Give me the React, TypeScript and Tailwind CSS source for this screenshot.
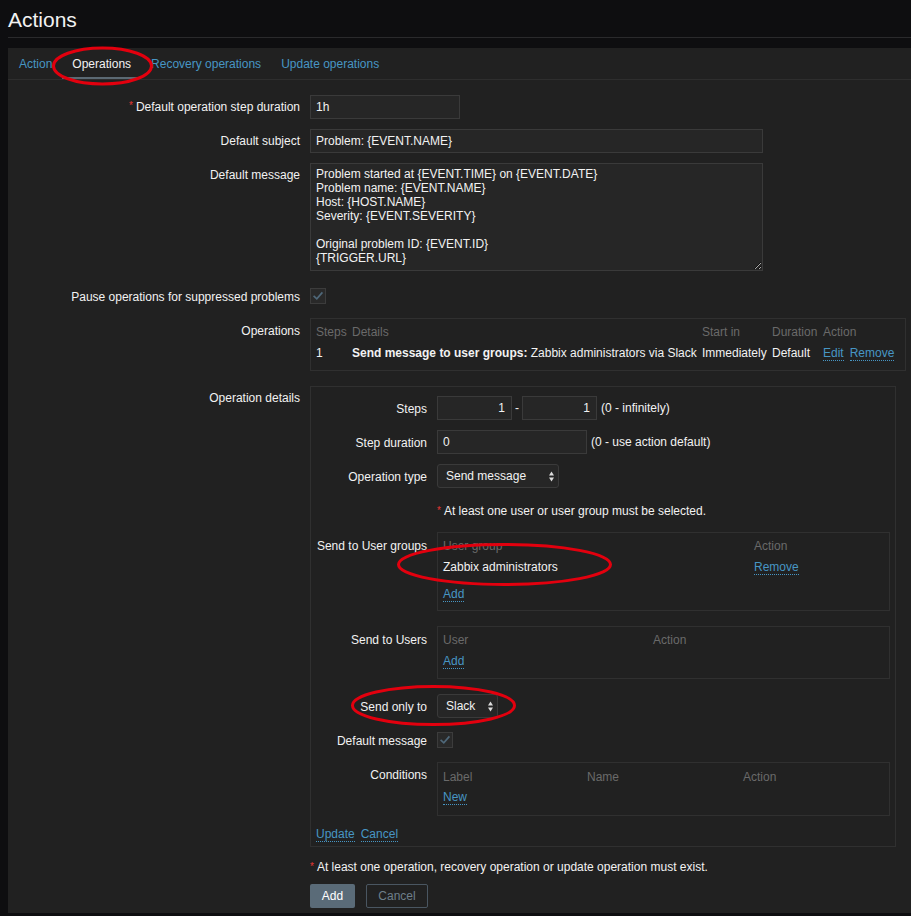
import React from 'react';

const linkCls = 'inline-block leading-[14px] text-[#4796c4] border-b border-dotted border-[#4796c4]';
const inputCls =
  'h-[24px] border border-[#3a3a3a] bg-[#262626] px-[5px] text-[12px] text-[#f2f2f2] outline-none';
const boxCls = 'border border-[#303030]';
const headCls = 'text-[#6a6a6a]';
// body rows of the small tables sit a pixel lower than their headers
const cellRow = 'flex h-[20px] items-center pt-[2px]';

const Asterisk = () => (
  <span className="mr-[3px] inline-block align-top text-[10px] leading-[12px] text-[#e33734]">*</span>
);

const Check = () => (
  <span className="flex h-[16px] w-[16px] items-center justify-center border border-[#3c3c3c] bg-[#292929]">
    <svg width="14" height="14" viewBox="1 1 14 14">
      <path d="M3.6 7.8 6.8 10.8 12.4 4.4" fill="none" stroke="#4f687a" strokeWidth="1.7" />
    </svg>
  </span>
);

const Arrows = () => (
  <svg width="5" height="11" viewBox="0 0 5 11" className="fill-[#dcdcdc]">
    <path d="M0 4.5 2.5 0.5 5 4.5Z" />
    <path d="M0 6.5 2.5 10.5 5 6.5Z" />
  </svg>
);

const Select = ({ value, width }: { value: string; width: string }) => (
  <div
    className={`flex h-[24px] ${width} items-center justify-between rounded-[3px] border border-[#3a3a3a] bg-[#262626] pl-[8px] pr-[4px]`}
  >
    <span>{value}</span>
    <Arrows />
  </div>
);

interface RowProps {
  label?: string;
  required?: boolean;
  labelPad?: string;
  className?: string;
  children: React.ReactNode;
}

// outer form: labels end at a fixed column, controls start 10px after
const Row = ({ label, required, labelPad = 'pt-[6px]', className = '', children }: RowProps) => (
  <div className={`flex ${className}`}>
    <div className={`w-[292px] shrink-0 text-right ${labelPad}`}>
      {required && <Asterisk />}
      {label}
    </div>
    <div className="ml-[10px] min-w-0 flex-1">{children}</div>
  </div>
);

// operation details box uses a narrower label column
const InnerRow = ({ label, labelPad = 'pt-[6px]', className = '', children }: RowProps) => (
  <div className={`flex ${className}`}>
    <div className={`w-[111px] shrink-0 text-right ${labelPad}`}>{label}</div>
    <div className="ml-[10px] min-w-0 flex-1">{children}</div>
  </div>
);

const tabs = ['Action', 'Operations', 'Recovery operations', 'Update operations'];

const message = `Problem started at {EVENT.TIME} on {EVENT.DATE}
Problem name: {EVENT.NAME}
Host: {HOST.NAME}
Severity: {EVENT.SEVERITY}

Original problem ID: {EVENT.ID}
{TRIGGER.URL}`;

export default function App() {
  return (
    <div className="relative h-[916px] overflow-hidden bg-[#0e0e10] font-['Liberation_Sans',Arial,sans-serif] text-[12px] leading-[14px] text-[#f2f2f2]">
      <div className="ml-2 h-[38px] border-b border-[#2a2a2c] pt-[8px]">
        <h1 className="text-[21px] leading-[24px]">Actions</h1>
      </div>

      <div className="ml-2 mt-[10px] h-[865px] bg-[#212121]">
        <div className="flex h-[32px] border-b border-[#2e2e2e] pl-px">
          {tabs.map((t) => (
            <div
              key={t}
              className={`relative flex items-center px-[10px] ${t === 'Operations' ? 'text-[#f2f2f2]' : 'text-[#4796c4]'}`}
            >
              {t}
              {t === 'Operations' && <span className="absolute bottom-0 left-0 right-0 h-[2px] bg-[#5b6973]" />}
            </div>
          ))}
        </div>

        <div className="pt-[15px]">
          <Row label="Default operation step duration" required labelPad="pt-[5px]">
            <input readOnly value="1h" className={`${inputCls} w-[150px]`} />
          </Row>
          <Row label="Default subject" labelPad="pt-[5px]" className="mt-[10px]">
            <input readOnly value="Problem: {EVENT.NAME}" className={`${inputCls} w-[453px]`} />
          </Row>
          <Row label="Default message" labelPad="pt-[5px]" className="mt-[10px]">
            <textarea
              readOnly
              value={message}
              className="block h-[108px] w-[453px] border border-[#3a3a3a] bg-[#262626] px-[5px] pt-[3px] text-[12px] leading-[14px] text-[#f2f2f2] outline-none"
            />
          </Row>
          <Row label="Pause operations for suppressed problems" className="mt-[13px]">
            <div className="flex h-[24px] items-center">
              <Check />
            </div>
          </Row>

          <Row label="Operations" className="mt-[10px]">
            <div className={`${boxCls} w-[596px] px-[5px] pb-[8px] pt-[3px]`}>
              <div className={`grid h-[20px] grid-cols-[36px_350px_70px_51px_1fr] items-center ${headCls}`}>
                <span>Steps</span>
                <span>Details</span>
                <span>Start in</span>
                <span>Duration</span>
                <span>Action</span>
              </div>
              <div className="grid h-[20px] grid-cols-[36px_350px_70px_51px_1fr] items-center whitespace-nowrap pt-[2px]">
                <span>1</span>
                <span>
                  <b>Send message to user groups:</b> Zabbix administrators via Slack
                </span>
                <span>Immediately</span>
                <span>Default</span>
                <span className="flex gap-[6px]">
                  <a className={linkCls}>Edit</a>
                  <a className={linkCls}>Remove</a>
                </span>
              </div>
            </div>
          </Row>

          <Row label="Operation details" labelPad="pt-[5px]" className="mt-[15px]">
            <div className={`${boxCls} w-[586px] pb-[4px] pl-[5px] pt-[9px]`}>
              <InnerRow label="Steps">
                <div className="flex h-[24px] items-center">
                  <input readOnly value="1" className={`${inputCls} w-[75px] pr-[6px] text-right`} />
                  <span className="mx-[3px]">-</span>
                  <input readOnly value="1" className={`${inputCls} w-[75px] pr-[6px] text-right`} />
                  <span className="ml-[4px]">(0 - infinitely)</span>
                </div>
              </InnerRow>
              <InnerRow label="Step duration" className="mt-[10px]">
                <div className="flex h-[24px] items-center">
                  <input readOnly value="0" className={`${inputCls} w-[150px]`} />
                  <span className="ml-[4px]">(0 - use action default)</span>
                </div>
              </InnerRow>
              <InnerRow label="Operation type" className="mt-[10px]">
                <Select value="Send message" width="w-[122px]" />
              </InnerRow>
              <InnerRow className="mt-[10px]">
                <div className="flex h-[24px] items-center pt-[2px]">
                  <Asterisk />
                  At least one user or user group must be selected.
                </div>
              </InnerRow>

              <InnerRow label="Send to User groups" labelPad="pt-[7px]" className="mt-[10px]">
                <div className={`${boxCls} w-[453px] px-[5px] pb-[7px] pt-[3px]`}>
                  <div className={`flex h-[20px] items-center ${headCls}`}>
                    <span className="w-[311px]">User group</span>
                    <span>Action</span>
                  </div>
                  <div className={cellRow}>
                    <span className="w-[311px]">Zabbix administrators</span>
                    <a className={linkCls}>Remove</a>
                  </div>
                  <div className={`mt-[7px] ${cellRow}`}>
                    <a className={linkCls}>Add</a>
                  </div>
                </div>
              </InnerRow>

              <InnerRow label="Send to Users" labelPad="pt-[7px]" className="mt-[15px]">
                <div className={`${boxCls} w-[453px] px-[5px] pb-[8px] pt-[3px]`}>
                  <div className={`flex h-[20px] items-center ${headCls}`}>
                    <span className="w-[210px]">User</span>
                    <span>Action</span>
                  </div>
                  <div className={cellRow}>
                    <a className={linkCls}>Add</a>
                  </div>
                </div>
              </InnerRow>

              <InnerRow label="Send only to" className="mt-[15px]">
                <Select value="Slack" width="w-[61px]" />
              </InnerRow>
              <InnerRow label="Default message" className="mt-[10px]">
                <div className="flex h-[24px] items-center">
                  <Check />
                </div>
              </InnerRow>

              <InnerRow label="Conditions" className="mt-[10px]">
                <div className={`${boxCls} w-[453px] px-[5px] pb-[9px] pt-[3px]`}>
                  <div className={`flex h-[20px] items-center pt-[2px] ${headCls}`}>
                    <span className="w-[144px]">Label</span>
                    <span className="w-[156px]">Name</span>
                    <span>Action</span>
                  </div>
                  <div className={cellRow}>
                    <a className={linkCls}>New</a>
                  </div>
                </div>
              </InnerRow>

              <div className="mt-[11px] flex gap-[6px]">
                <a className={linkCls}>Update</a>
                <a className={linkCls}>Cancel</a>
              </div>
            </div>
          </Row>

          <Row className="mt-[12px]">
            <div className="flex h-[14px] items-center pt-[2px]">
              <Asterisk />
              At least one operation, recovery operation or update operation must exist.
            </div>
          </Row>
          <Row className="mt-[11px]">
            <div className="flex gap-[11px]">
              <button className="h-[24px] w-[45px] rounded-[2px] bg-[#5a6b78] text-[12px] text-white">Add</button>
              <button className="h-[24px] w-[62px] rounded-[2px] border border-[#4a5661] text-[12px] text-[#6e7f8a]">
                Cancel
              </button>
            </div>
          </Row>
        </div>
      </div>

      {/* red highlight rings drawn over the form */}
      <svg
        className="pointer-events-none absolute left-0 top-0"
        width={911}
        height={916}
        fill="none"
        stroke="#e3000e"
        strokeWidth={3}
      >
        <ellipse cx={102.5} cy={66} rx={49} ry={18} />
        <ellipse cx={504.5} cy={564.5} rx={106} ry={20} />
        <ellipse cx={433.5} cy={705.5} rx={81} ry={19} />
      </svg>
    </div>
  );
}
